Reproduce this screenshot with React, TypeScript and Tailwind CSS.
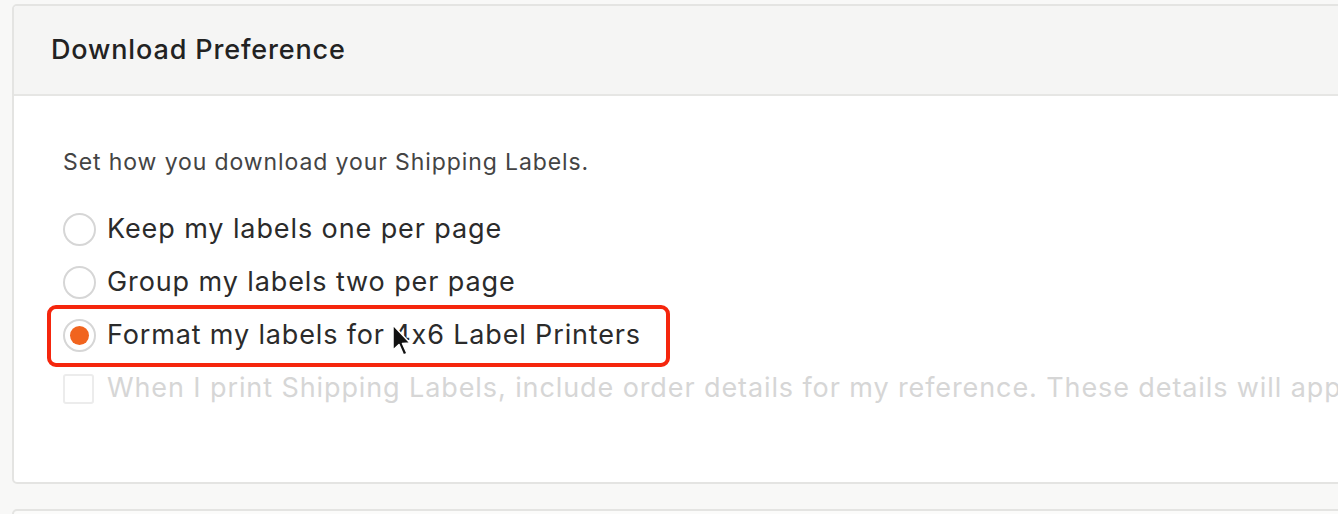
import React from "react";

function Radio({ checked }: { checked?: boolean }) {
  return (
    <span className="flex h-[33px] w-[33px] shrink-0 items-center justify-center rounded-full border-[2px] border-[#d6d6d6] bg-white">
      {checked && <span className="h-[19px] w-[19px] rounded-full bg-[#f1641e]" />}
    </span>
  );
}

export default function App() {
  return (
    <div
      className="h-[514px] w-[1338px] overflow-hidden bg-[#f8f8f7] pt-[4px] pl-[12px]"
      style={{ fontFamily: "Inter, 'Noto Sans', sans-serif" }}
    >
      <div className="w-[1400px] overflow-hidden rounded-[5px] border-[2px] border-[#e4e4e2] bg-white">
        <div className="flex h-[90px] items-center border-b-[2px] border-[#e6e6e4] bg-[#f5f5f4] pl-[37px]">
          <h2 className="text-[27px] font-medium tracking-[0.85px] text-[#222222]">Download Preference</h2>
        </div>
        <div className="h-[386px] pl-[49px] pt-[51px]">
          <p className="text-[23px] leading-[30px] tracking-[0.9px] text-[#444444]">Set how you download your Shipping Labels.</p>
          <div className="mt-[26px] flex flex-col">
            <label className="flex h-[53px] items-center gap-[11px]">
              <Radio />
              <span className="text-[27px] tracking-[0.9px] text-[#2b2b2b]">Keep my labels one per page</span>
            </label>
            <label className="flex h-[53px] items-center gap-[11px]">
              <Radio />
              <span className="text-[27px] tracking-[0.9px] text-[#2b2b2b]">Group my labels two per page</span>
            </label>
            <label className="relative flex h-[53px] items-center gap-[11px]">
              <Radio checked />
              <span className="text-[27px] tracking-[0.85px] text-[#2b2b2b]">Format my labels for 4x6 Label Printers</span>
              <span className="pointer-events-none absolute left-[-16px] top-[-4px] h-[62px] w-[623px] rounded-[9px] border-[4px] border-[#f5260d]" />
              <svg
                className="pointer-events-none absolute left-[328px] top-[15px]"
                width="22"
                height="33"
                viewBox="0 0 22 33"
              >
                <path d="M2 1 L2 26 L8 20.5 L12.5 31 L16 29.5 L11.5 19.5 L19 19 Z" fill="#111" stroke="#fff" strokeWidth="1.5" strokeLinejoin="round" />
              </svg>
            </label>
            <label className="flex h-[53px] items-center gap-[13px]">
              <span className="h-[30px] w-[31px] shrink-0 rounded-[3px] border-[2px] border-[#ececec] bg-white" />
              <span className="whitespace-nowrap text-[27px] tracking-[0.9px] text-[#d6d6d6]">
                When I print Shipping Labels, include order details for my reference. These details will appear on the label.
              </span>
            </label>
          </div>
        </div>
      </div>
      <div className="mt-[25px] h-[40px] w-[1400px] rounded-[5px] border-[2px] border-[#e4e4e2] bg-[#fbfbfa]" />
    </div>
  );
}
